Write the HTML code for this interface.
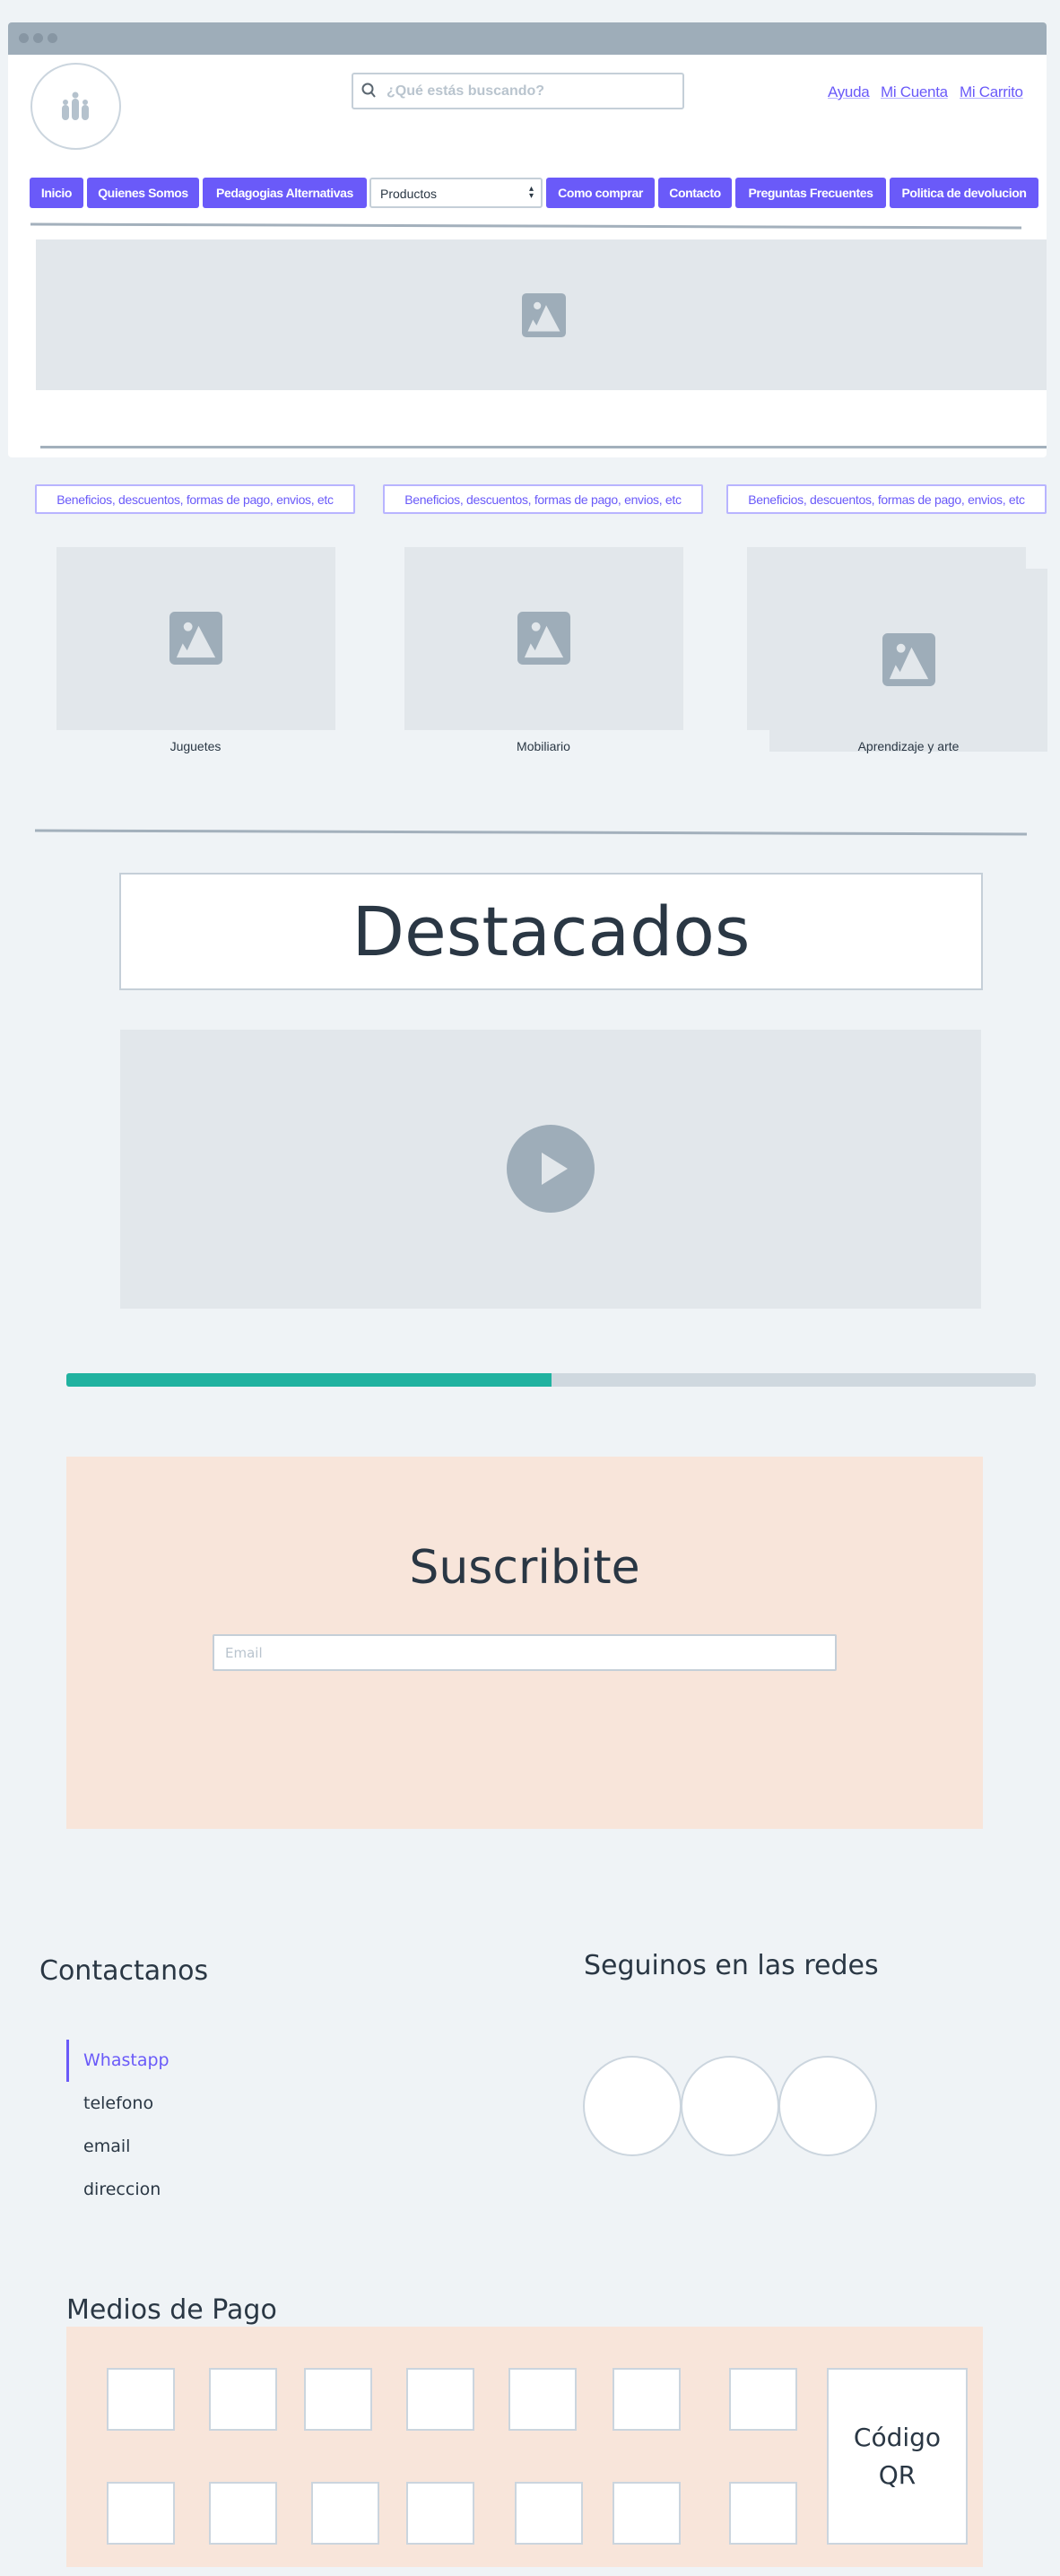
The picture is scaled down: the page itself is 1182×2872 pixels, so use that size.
<!DOCTYPE html>
<html><head><meta charset="utf-8"><style>
*{box-sizing:border-box;margin:0;padding:0}
body{width:1182px;height:2872px;background:#eff3f6;position:relative;overflow:hidden;font-family:"Liberation Sans Narrow","Liberation Sans",sans-serif;color:#2a3744}
.a{position:absolute}
.ph{background:#e2e7eb}
.btn{position:absolute;top:198px;height:34px;background:#6a5af9;color:#fff;font-weight:bold;font-size:14px;letter-spacing:-0.4px;border-radius:3px;display:flex;align-items:center;justify-content:center;white-space:nowrap}
.ben{position:absolute;top:540px;height:33px;border:2px solid #b8b4ff;background:#fff;color:#6a5af9;font-size:14px;letter-spacing:-0.3px;display:flex;align-items:center;justify-content:center;border-radius:2px;white-space:nowrap}
.lbl{position:absolute;top:824px;font-size:14px;width:300px;text-align:center;color:#2a3744}
.sq{position:absolute;width:76px;height:70px;background:#fff;border:2px solid #cbd5de}
.ds{font-family:"DejaVu Sans","Liberation Sans",sans-serif}
.it{position:absolute;left:93px;font-size:19px;font-family:"DejaVu Sans",sans-serif;color:#2a3744}
.cir{position:absolute;top:2292px;width:110px;height:112px;border-radius:50%;background:#fff;border:2px solid #cbd5de}
</style></head><body>
<div class="a" style="left:9px;top:25px;width:1158px;height:485px;background:#fff;border-radius:4px;overflow:hidden">
 <div class="a" style="left:0;top:0;width:100%;height:36px;background:#9eadb9"></div>
 <div class="a" style="left:12px;top:12px;width:11px;height:11px;border-radius:50%;background:#8796a3"></div>
 <div class="a" style="left:28px;top:12px;width:11px;height:11px;border-radius:50%;background:#8796a3"></div>
 <div class="a" style="left:44px;top:12px;width:11px;height:11px;border-radius:50%;background:#8796a3"></div>
</div>
<div class="a" style="left:34px;top:70px;width:101px;height:97px;border-radius:50%;border:2px solid #cbd5de;background:#fff"></div>
<svg class="a" style="left:68px;top:101px" width="32" height="36" viewBox="0 0 32 36"><g fill="#b5c2cd"><circle cx="16" cy="5" r="3.5"/><rect x="12" y="9" width="8" height="24" rx="4"/><circle cx="5" cy="13" r="3"/><rect x="1" y="16" width="8" height="17" rx="4"/><circle cx="27" cy="13" r="3"/><rect x="23" y="16" width="8" height="17" rx="4"/></g></svg>
<div class="a" style="left:392px;top:81px;width:371px;height:41px;border:2px solid #c5cfd8;border-radius:3px;background:#fff"></div>
<svg class="a" style="left:403px;top:92px" width="16" height="18" viewBox="0 0 16 18"><circle cx="7" cy="7" r="5.5" fill="none" stroke="#5a6670" stroke-width="2"/><line x1="11" y1="11" x2="15" y2="16" stroke="#5a6670" stroke-width="2"/></svg>
<div class="a" style="left:431px;top:93px;font-size:16px;color:#b9c4ce;font-weight:bold">¿Qué estás buscando?</div>
<div class="a" style="left:923px;top:93px;font-size:17px;color:#6a5af9;text-decoration:underline;text-decoration-color:#b8b4ff;white-space:nowrap;letter-spacing:-0.3px">Ayuda</div>
<div class="a" style="left:982px;top:93px;font-size:17px;color:#6a5af9;text-decoration:underline;text-decoration-color:#b8b4ff;white-space:nowrap;letter-spacing:-0.3px">Mi Cuenta</div>
<div class="a" style="left:1070px;top:93px;font-size:17px;color:#6a5af9;text-decoration:underline;text-decoration-color:#b8b4ff;white-space:nowrap;letter-spacing:-0.3px">Mi Carrito</div>
<div class="btn" style="left:33px;width:60px">Inicio</div>
<div class="btn" style="left:97px;width:125px">Quienes Somos</div>
<div class="btn" style="left:226px;width:183px">Pedagogias Alternativas</div>
<div class="a" style="left:412px;top:198px;width:193px;height:34px;border:2px solid #c5cfd8;border-radius:3px;background:#fff;font-size:14px;padding:8px 10px">Productos<span style="position:absolute;right:8px;top:7px;font-size:10px;line-height:8px">▴<br>▾</span></div>
<div class="btn" style="left:609px;width:121px">Como comprar</div>
<div class="btn" style="left:734px;width:82px">Contacto</div>
<div class="btn" style="left:820px;width:168px">Preguntas Frecuentes</div>
<div class="btn" style="left:992px;width:166px">Politica de devolucion</div>
<svg class="a" style="left:0;top:0" width="1182" height="1000"><line x1="34" y1="250" x2="1139" y2="254" stroke="#a3b0bc" stroke-width="3"/><line x1="39" y1="926" x2="1145" y2="930" stroke="#a3b0bc" stroke-width="3"/></svg>
<div class="a ph" style="left:40px;top:267px;width:1127px;height:168px"></div>
<svg class="a" style="left:582px;top:327px" width="49" height="49" viewBox="0 0 60 60"><rect width="60" height="60" rx="6" fill="#9eadb9"/><circle cx="21" cy="17" r="5" fill="#e2e7eb"/><path d="M8 52 L15 36 L20 44 L33 16 L52 52Z" fill="#e2e7eb"/></svg>
<div class="a" style="left:45px;top:497px;width:1122px;height:3px;background:#a3b0bc"></div>
<div class="ben" style="left:39px;width:357px">Beneficios, descuentos, formas de pago, envios, etc</div>
<div class="ben" style="left:427px;width:357px">Beneficios, descuentos, formas de pago, envios, etc</div>
<div class="ben" style="left:810px;width:357px">Beneficios, descuentos, formas de pago, envios, etc</div>
<div class="a ph" style="left:63px;top:610px;width:311px;height:204px"></div>
<div class="a ph" style="left:451px;top:610px;width:311px;height:204px"></div>
<div class="a ph" style="left:833px;top:610px;width:311px;height:204px"></div>
<div class="a ph" style="left:858px;top:634px;width:310px;height:204px"></div>
<svg class="a" style="left:189px;top:682px" width="59" height="59" viewBox="0 0 60 60"><rect width="60" height="60" rx="6" fill="#9eadb9"/><circle cx="21" cy="17" r="5" fill="#e2e7eb"/><path d="M8 52 L15 36 L20 44 L33 16 L52 52Z" fill="#e2e7eb"/></svg>
<svg class="a" style="left:577px;top:682px" width="59" height="59" viewBox="0 0 60 60"><rect width="60" height="60" rx="6" fill="#9eadb9"/><circle cx="21" cy="17" r="5" fill="#e2e7eb"/><path d="M8 52 L15 36 L20 44 L33 16 L52 52Z" fill="#e2e7eb"/></svg>
<svg class="a" style="left:984px;top:706px" width="59" height="59" viewBox="0 0 60 60"><rect width="60" height="60" rx="6" fill="#9eadb9"/><circle cx="21" cy="17" r="5" fill="#e2e7eb"/><path d="M8 52 L15 36 L20 44 L33 16 L52 52Z" fill="#e2e7eb"/></svg>
<div class="lbl" style="left:68px">Juguetes</div>
<div class="lbl" style="left:456px">Mobiliario</div>
<div class="lbl" style="left:863px">Aprendizaje y arte</div>
<div class="a ds" style="left:133px;top:973px;width:963px;height:131px;background:#fff;border:2px solid #c5cfd8;display:flex;align-items:center;justify-content:center;font-size:76px;color:#2a3744">Destacados</div>
<div class="a ph" style="left:134px;top:1148px;width:960px;height:311px"></div>
<svg class="a" style="left:565px;top:1254px" width="98" height="98" viewBox="0 0 98 98"><circle cx="49" cy="49" r="49" fill="#9eadb9"/><path d="M39 31 L68 49 L39 67Z" fill="#e2e7eb"/></svg>
<div class="a" style="left:74px;top:1531px;width:1081px;height:15px;background:#cfd8df;border-radius:3px;overflow:hidden"><div style="width:541px;height:100%;background:#20b2a0"></div></div>
<div class="a" style="left:74px;top:1624px;width:1022px;height:415px;background:#f8e5da"></div>
<div class="a ds" style="left:74px;top:1718px;width:1022px;text-align:center;font-size:52px;color:#2a3744">Suscribite</div>
<div class="a ds" style="left:237px;top:1822px;width:696px;height:41px;background:#fff;border:2px solid #c5cfd8;border-radius:2px;font-size:15px;color:#b9c4ce;padding:10px 12px">Email</div>
<div class="a ds" style="left:44px;top:2180px;font-size:30px">Contactanos</div>
<div class="a ds" style="left:651px;top:2174px;font-size:30px">Seguinos en las redes</div>
<div class="a" style="left:74px;top:2274px;width:3px;height:47px;background:#6a5af9"></div>
<div class="it" style="left:93px;top:2286px;color:#6a5af9">Whastapp</div>
<div class="it" style="top:2334px">telefono</div>
<div class="it" style="top:2382px">email</div>
<div class="it" style="top:2430px">direccion</div>
<div class="cir" style="left:650px"></div>
<div class="cir" style="left:759px"></div>
<div class="cir" style="left:868px"></div>
<div class="a ds" style="left:74px;top:2558px;font-size:30px">Medios de Pago</div>
<div class="a" style="left:74px;top:2594px;width:1022px;height:268px;background:#f8e5da"></div>
<div class="sq" style="left:119px;top:2640px"></div><div class="sq" style="left:233px;top:2640px"></div><div class="sq" style="left:339px;top:2640px"></div><div class="sq" style="left:453px;top:2640px"></div><div class="sq" style="left:567px;top:2640px"></div><div class="sq" style="left:683px;top:2640px"></div><div class="sq" style="left:813px;top:2640px"></div>
<div class="sq" style="left:119px;top:2767px"></div><div class="sq" style="left:233px;top:2767px"></div><div class="sq" style="left:347px;top:2767px"></div><div class="sq" style="left:453px;top:2767px"></div><div class="sq" style="left:574px;top:2767px"></div><div class="sq" style="left:683px;top:2767px"></div><div class="sq" style="left:813px;top:2767px"></div>
<div class="a ds" style="left:922px;top:2640px;width:157px;height:197px;background:#fff;border:2px solid #cbd5de;display:flex;align-items:center;justify-content:center;text-align:center;font-size:28px;line-height:42px">Código<br>QR</div>
</body></html>
